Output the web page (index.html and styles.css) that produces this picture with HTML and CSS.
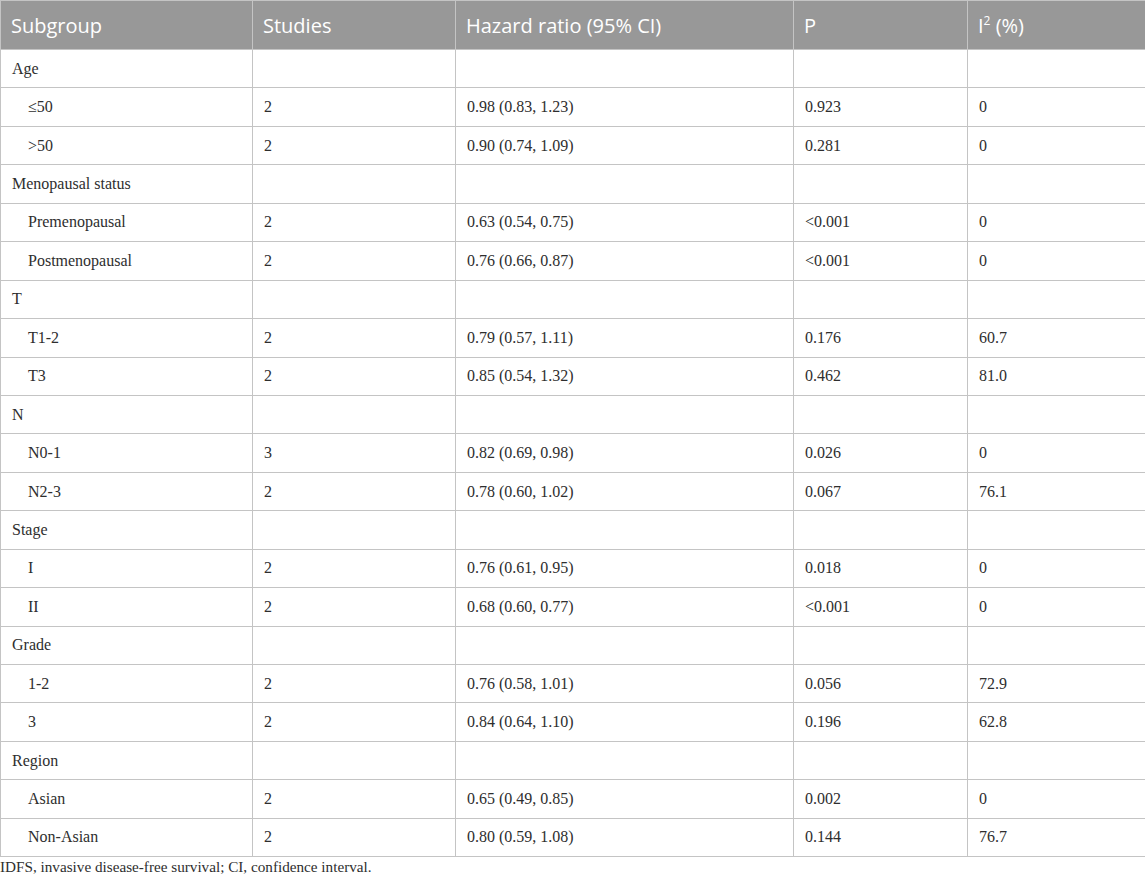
FILE: index.html
```html
<!DOCTYPE html>
<html>
<head>
<meta charset="utf-8">
<link rel="stylesheet" href="styles.css">
</head>
<body>
<table class="data">
<colgroup>
<col class="c1"><col class="c2"><col class="c3"><col class="c4"><col class="c5">
</colgroup>
<thead>
<tr><th>Subgroup</th><th>Studies</th><th>Hazard ratio (95% CI)</th><th>P</th><th>I<sup>2</sup> (%)</th></tr>
</thead>
<tbody>
<tr><td>Age</td><td></td><td></td><td></td><td></td></tr>
<tr><td class="ind">≤50</td><td>2</td><td>0.98 (0.83, 1.23)</td><td>0.923</td><td>0</td></tr>
<tr><td class="ind">&gt;50</td><td>2</td><td>0.90 (0.74, 1.09)</td><td>0.281</td><td>0</td></tr>
<tr><td>Menopausal status</td><td></td><td></td><td></td><td></td></tr>
<tr><td class="ind">Premenopausal</td><td>2</td><td>0.63 (0.54, 0.75)</td><td>&lt;0.001</td><td>0</td></tr>
<tr><td class="ind">Postmenopausal</td><td>2</td><td>0.76 (0.66, 0.87)</td><td>&lt;0.001</td><td>0</td></tr>
<tr><td>T</td><td></td><td></td><td></td><td></td></tr>
<tr><td class="ind">T1-2</td><td>2</td><td>0.79 (0.57, 1.11)</td><td>0.176</td><td>60.7</td></tr>
<tr><td class="ind">T3</td><td>2</td><td>0.85 (0.54, 1.32)</td><td>0.462</td><td>81.0</td></tr>
<tr><td>N</td><td></td><td></td><td></td><td></td></tr>
<tr><td class="ind">N0-1</td><td>3</td><td>0.82 (0.69, 0.98)</td><td>0.026</td><td>0</td></tr>
<tr><td class="ind">N2-3</td><td>2</td><td>0.78 (0.60, 1.02)</td><td>0.067</td><td>76.1</td></tr>
<tr><td>Stage</td><td></td><td></td><td></td><td></td></tr>
<tr><td class="ind">I</td><td>2</td><td>0.76 (0.61, 0.95)</td><td>0.018</td><td>0</td></tr>
<tr><td class="ind">II</td><td>2</td><td>0.68 (0.60, 0.77)</td><td>&lt;0.001</td><td>0</td></tr>
<tr><td>Grade</td><td></td><td></td><td></td><td></td></tr>
<tr><td class="ind">1-2</td><td>2</td><td>0.76 (0.58, 1.01)</td><td>0.056</td><td>72.9</td></tr>
<tr><td class="ind">3</td><td>2</td><td>0.84 (0.64, 1.10)</td><td>0.196</td><td>62.8</td></tr>
<tr><td>Region</td><td></td><td></td><td></td><td></td></tr>
<tr><td class="ind">Asian</td><td>2</td><td>0.65 (0.49, 0.85)</td><td>0.002</td><td>0</td></tr>
<tr><td class="ind">Non-Asian</td><td>2</td><td>0.80 (0.59, 1.08)</td><td>0.144</td><td>76.7</td></tr>
</tbody>
</table>
<p class="note">IDFS, invasive disease-free survival; CI, confidence interval.</p>
</body>
</html>
```
FILE: styles.css
```css
html, body {
  margin: 0;
  padding: 0;
  background: #ffffff;
}
body {
  font-family: "Liberation Serif", "Times New Roman", serif;
  color: #2e2e2e;
}
.data {
  width: 1145px;
  border-collapse: collapse;
  table-layout: fixed;
}
.c1 { width: 252px; }
.c2 { width: 203px; }
.c3 { width: 338px; }
.c4 { width: 174px; }
.c5 { width: 178px; }
.data th, .data td {
  border: 1px solid #c4c4c4;
  text-align: left;
  padding: 0 0 0 11px;
  white-space: nowrap;
}
.data th {
  background: #989898;
  color: #ffffff;
  font-family: "Open Sans", "Noto Sans", sans-serif;
  font-weight: 400;
  font-size: 20px;
  height: 47px;
  padding-left: 10px;
  padding-top: 1px;
  padding-bottom: 0;
  line-height: 1;
}
.data th sup {
  font-size: 12px;
  vertical-align: 8px;
  line-height: 0;
}
.data tbody tr {
  height: 38.45px;
}
.data td {
  font-size: 16px;
}
.data td.ind {
  padding-left: 27px;
}
.note {
  margin: 1px 0 0 0;
  font-size: 15.2px;
  color: #2e2e2e;
}
```
